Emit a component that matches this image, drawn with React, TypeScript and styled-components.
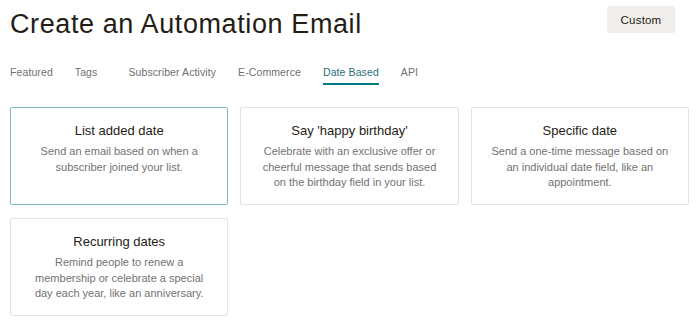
import React from "react";
import styled, { createGlobalStyle } from "styled-components";

const Global = createGlobalStyle`
  html, body { margin: 0; padding: 0; background: #ffffff; }
  body { font-family: "Liberation Sans", Arial, sans-serif; color: #241c15; }
  * { box-sizing: border-box; }
`;

const Page = styled.div`
  width: 700px;
  padding: 6px 11px 0 10px;
`;

const Header = styled.div`
  display: flex;
  justify-content: space-between;
  align-items: flex-start;
`;

const Title = styled.h1`
  margin: 0;
  font-size: 27px;
  line-height: 36px;
  font-weight: 400;
  color: #241c15;
  letter-spacing: 0.6px;
`;

const CustomButton = styled.button`
  margin-right: 14px;
  width: 68px;
  height: 27px;
  border: none;
  border-radius: 2px;
  background: #efeeea;
  color: #241c15;
  font-family: "Liberation Sans", Arial, sans-serif;
  font-size: 11.5px;
  letter-spacing: 0.2px;
  padding: 0;
  cursor: pointer;
`;

const Tabs = styled.nav`
  display: flex;
  gap: 22px;
  margin-top: 22px;
`;

const Tab = styled.a<{ $active?: boolean; $extra?: number }>`
  display: block;
  font-size: 10.5px;
  line-height: 16px;
  letter-spacing: 0.1px;
  padding-bottom: 3px;
  border-bottom: 2px solid ${(p) => (p.$active ? "#007c89" : "transparent")};
  color: ${(p) => (p.$active ? "#1f6f7c" : "#6f6f6f")};
  margin-right: ${(p) => p.$extra ?? 0}px;
  cursor: pointer;
`;

const Grid = styled.div`
  display: grid;
  grid-template-columns: repeat(3, 1fr);
  column-gap: 12px;
  row-gap: 13px;
  margin-top: 22px;
`;

const Card = styled.div<{ $selected?: boolean }>`
  height: 98px;
  border: 1px solid ${(p) => (p.$selected ? "#80b7c1" : "#e3e3e3")};
  border-radius: 2px;
  padding: 14px 10px 0;
  text-align: center;
  background: #fff;
`;

const CardTitle = styled.div`
  font-size: 13px;
  line-height: 18px;
  color: #241c15;
`;

const CardText = styled.div`
  margin-top: 4px;
  font-size: 11px;
  line-height: 15.5px;
  color: #727272;
`;

const tabs = [
  { label: "Featured" },
  { label: "Tags", extra: 9 },
  { label: "Subscriber Activity" },
  { label: "E-Commerce" },
  { label: "Date Based", active: true },
  { label: "API" },
];

const cards = [
  {
    title: "List added date",
    text: ["Send an email based on when a", "subscriber joined your list."],
    selected: true,
  },
  {
    title: "Say 'happy birthday'",
    text: [
      "Celebrate with an exclusive offer or",
      "cheerful message that sends based",
      "on the birthday field in your list.",
    ],
  },
  {
    title: "Specific date",
    text: [
      "Send a one-time message based on",
      "an individual date field, like an",
      "appointment.",
    ],
  },
  {
    title: "Recurring dates",
    text: [
      "Remind people to renew a",
      "membership or celebrate a special",
      "day each year, like an anniversary.",
    ],
  },
];

export default function App() {
  return (
    <>
      <Global />
      <Page>
        <Header>
          <Title>Create an Automation Email</Title>
          <CustomButton>Custom</CustomButton>
        </Header>
        <Tabs>
          {tabs.map((t) => (
            <Tab key={t.label} $active={t.active} $extra={t.extra}>
              {t.label}
            </Tab>
          ))}
        </Tabs>
        <Grid>
          {cards.map((c) => (
            <Card key={c.title} $selected={c.selected}>
              <CardTitle>{c.title}</CardTitle>
              <CardText>
                {c.text.map((line, i) => (
                  <div key={i}>{line}</div>
                ))}
              </CardText>
            </Card>
          ))}
        </Grid>
      </Page>
    </>
  );
}
